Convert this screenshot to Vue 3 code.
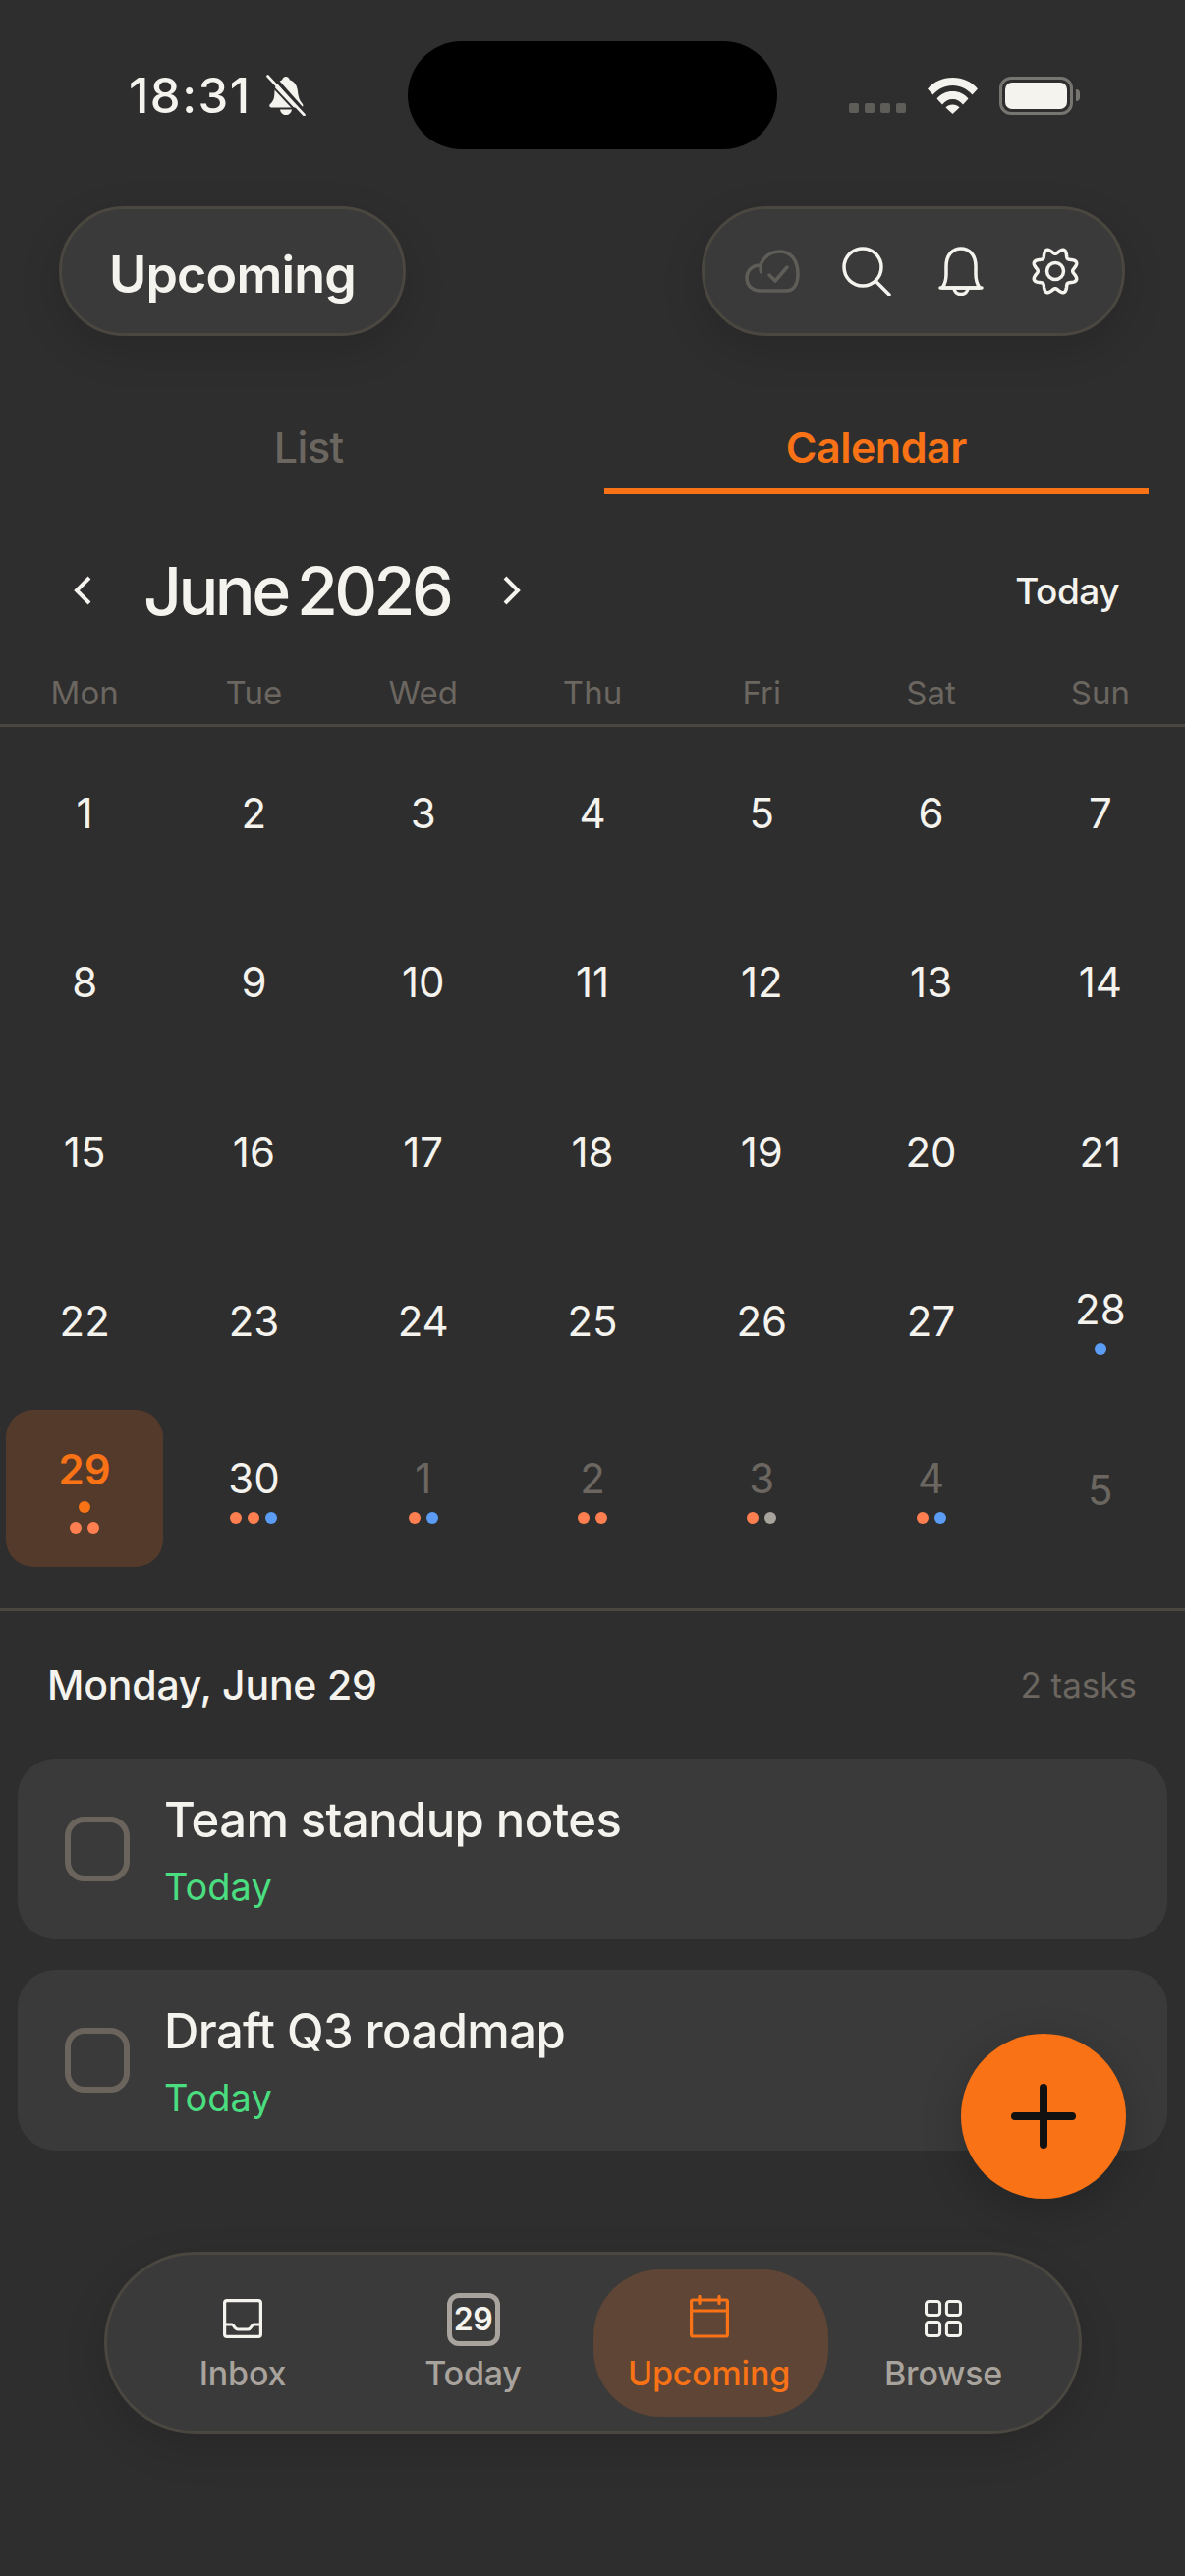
<template>
  <div class="screen">
    <div class="status">
      <div class="status-left">
        <span class="time">18:31</span>
        <svg class="mute" viewBox="0 0 40 42">
          <path d="M20 2c2 0 3.500 1.300 3.800 3.200C29 7 31.500 11.500 32 17c.4 5 1.500 9 5 13 1 1.500.4 3.500-2 3.500H6c-2.800 0-3.500-2-2-3.500 2.500-2.500 3.500-4.500 4-7 .6-3 .3-6 .8-9C9.800 9.500 12.500 6.500 16.200 5.200 16.500 3.300 18 2 20 2z" fill="#f5f3ee" />
          <path d="M14 35.500h12c-.5 3.500-3 5.500-6 5.500s-5.500-2-6-5.500z" fill="#f5f3ee" />
          <path d="M5.500 0l35 39.500" stroke="#2e2e2e" stroke-width="3.500" />
          <path d="M1.500 1.500l37 39.500" stroke="#f5f3ee" stroke-width="2.600" stroke-linecap="round" />
          <path d="M-2 3l37 39.500" stroke="#2e2e2e" stroke-width="2" />
        </svg>
      </div>
      <div class="island"></div>
      <div class="status-right">
        <div class="cell-dots"><i v-for="n in 4" :key="n"></i></div>
        <svg class="wifi" viewBox="0 0 51 38">
          <path d="M0 12.500C6.500 5 15 1 25.500 1S44.500 5 51 12.500l-5.500 6C40 12.500 33.500 9 25.500 9S11 12.500 5.500 18.500z" fill="#f5f3ee" />
          <path d="M9.500 22.500C13.500 17.500 19 15 25.500 15s12 2.500 16 7.500l-5.500 6c-2.800-3.500-6-5.500-10.500-5.500S17.800 25 15 28.500z" fill="#f5f3ee" />
          <path d="M18.500 31.500c1.800-1.800 4-3 7-3s5.200 1.200 7 3L25.500 38z" fill="#f5f3ee" />
        </svg>
        <div class="battery"><div class="battery-fill"></div></div>
        <div class="battery-nub"></div>
      </div>
    </div>

    <header class="top">
      <div class="title-pill">Upcoming</div>
      <div class="actions">
        <svg class="ic cloud" viewBox="0 0 56 44" fill="none" stroke="#5f5d58" stroke-width="3.500" stroke-linecap="round" stroke-linejoin="round">
          <path d="M16 42h26c8 0 12-7 12-17C54 11 47 2 36 2 27 2 19 7 16 16 8 16 2 21 2 29c0 8 6 13 14 13z" />
          <path d="M16 16c0 0 0 4 .5 7" />
          <path d="M25 26l6 6 12-14" />
        </svg>
        <svg class="ic search" viewBox="0 0 50 50" fill="none" stroke="#f5f3ee" stroke-width="3.500" stroke-linecap="round">
          <circle cx="21" cy="21" r="19" />
          <path d="M34 35l14 14" />
        </svg>
        <svg class="ic bell" viewBox="0 0 46 50" fill="none" stroke="#f5f3ee" stroke-width="3.500" stroke-linecap="round" stroke-linejoin="round">
          <path d="M4 42c3-4 4-8 4-14v-8C8 9 14 2 23 2s15 7 15 18v8c0 6 1 10 4 14z" />
          <path d="M2 42h42" />
          <path d="M16 42c0 4 3 6.500 7 6.500s7-2.500 7-6.500" />
        </svg>
        <svg class="ic gear" viewBox="0 0 50 50" fill="none" stroke="#f5f3ee" stroke-width="3.500" stroke-linejoin="round">
          <path :d="gearPath" />
          <circle cx="25" cy="25" r="8.500" />
        </svg>
      </div>
    </header>

    <nav class="tabs">
      <div class="tab">List</div>
      <div class="tab active">Calendar</div>
    </nav>

    <div class="month-row">
      <svg class="chev" viewBox="0 0 20 30" fill="none" stroke="#f5f3ee" stroke-width="4"><path d="M17 2L4 15l13 13" /></svg>
      <div class="month">June 2026</div>
      <svg class="chev next" viewBox="0 0 20 30" fill="none" stroke="#f5f3ee" stroke-width="4"><path d="M3 2l13 13L3 28" /></svg>
      <div class="today-btn">Today</div>
    </div>

    <div class="weekdays">
      <span v-for="d in weekdays" :key="d">{{ d }}</span>
    </div>

    <div class="grid">
      <div v-for="c in cells" :key="c.key" class="cell" :class="{ muted: c.muted, selected: c.selected }">
        <span class="num">{{ c.n }}</span>
        <div v-if="c.dots.length" class="dots">
          <i v-for="(col, i) in c.dots" :key="i" :style="{ background: col }"></i>
        </div>
      </div>
    </div>

    <section class="day">
      <div class="day-head">
        <span class="day-title">Monday, June 29</span>
        <span class="day-count">2 tasks</span>
      </div>
      <div v-for="t in tasks" :key="t" class="task">
        <div class="check"></div>
        <div>
          <div class="task-title">{{ t }}</div>
          <div class="task-date">Today</div>
        </div>
      </div>
    </section>

    <button class="fab">
      <svg viewBox="0 0 66 66" stroke="#111" stroke-width="8" stroke-linecap="round"><path d="M33 4v58M4 33h58" /></svg>
    </button>

    <div class="bottom-nav">
      <div class="nav-item inbox">
        <svg class="nav-ic" viewBox="0 0 40 40" fill="none" stroke="#f5f3ee" stroke-width="3.200" stroke-linejoin="round">
          <rect x="1.600" y="1.600" width="36.800" height="36.800" rx="2.500" />
          <path d="M1.600 26h7.500c2 0 2.500 5 6 5h10c3.500 0 4-5 6-5h7.300" />
        </svg>
        <span>Inbox</span>
      </div>
      <div class="nav-item today">
        <div class="today-ic">29</div>
        <span>Today</span>
      </div>
      <div class="nav-item upcoming">
        <svg class="nav-ic cal" viewBox="0 0 40 44" fill="none" stroke="#f97316" stroke-width="3.200" stroke-linecap="round">
          <rect x="1.600" y="5" width="36.800" height="37" rx="1.500" />
          <path d="M1.600 16h36.800M10 1.500v7M30 1.500v7" />
        </svg>
        <span>Upcoming</span>
      </div>
      <div class="nav-item browse">
        <svg class="nav-ic" viewBox="0 0 40 40" fill="none" stroke="#f5f3ee" stroke-width="3.200">
          <rect x="1.600" y="1.600" width="14.800" height="14.800" rx="3" />
          <rect x="23.600" y="1.600" width="14.800" height="14.800" rx="3" />
          <rect x="1.600" y="23.600" width="14.800" height="14.800" rx="3" />
          <rect x="23.600" y="23.600" width="14.800" height="14.800" rx="3" />
        </svg>
        <span>Browse</span>
      </div>
    </div>
  </div>
</template>

<script setup>
const weekdays = ['Mon', 'Tue', 'Wed', 'Thu', 'Fri', 'Sat', 'Sun']
const tasks = ['Team standup notes', 'Draft Q3 roadmap']

const orange = '#ff7f50'
const blue = '#5b9cf5'
const grey = '#a8a39c'

const cells = []
for (let n = 1; n <= 30; n++) {
  cells.push({ key: 'j' + n, n, muted: false, selected: n === 29, dots: [] })
}
cells[27].dots = [blue]
cells[28].dots = [orange, orange, '#f97316']
cells[29].dots = [orange, orange, blue]

const nextMonth = [[orange, blue], [orange, orange], [orange, grey], [orange, blue], []]
nextMonth.forEach((dots, i) => {
  cells.push({ key: 'n' + i, n: i + 1, muted: true, selected: false, dots })
})

// wavy 8 lobe outline for the settings icon
let gearPath = ''
for (let i = 0; i <= 160; i++) {
  const a = (i / 160) * Math.PI * 2
  const r = 20.5 + 2.8 * Math.cos(8 * a)
  const x = 25 + r * Math.sin(a + Math.PI / 8)
  const y = 25 - r * Math.cos(a + Math.PI / 8)
  gearPath += (i ? 'L' : 'M') + x.toFixed(2) + ' ' + y.toFixed(2)
}
gearPath += 'Z'
</script>

<style scoped>
.screen {
  position: relative;
  width: 1206px;
  height: 2622px;
  overflow: hidden;
  background: #2e2e2e;
  color: #f5f3ee;
  font-family: Inter, "Liberation Sans", sans-serif;
}

.status {
  display: flex;
  align-items: center;
  height: 110px;
  padding: 42px 0 0 131px;
}
.status-left {
  display: flex;
  align-items: center;
  gap: 15px;
  width: 284px;
  height: 110px;
}
.time {
  font-size: 49px;
  font-weight: 500;
  letter-spacing: 1.5px;
  line-height: 1;
}
.mute {
  width: 40px;
  height: 42px;
}
.island {
  width: 376px;
  height: 110px;
  border-radius: 55px;
  background: #000;
}
.status-right {
  display: flex;
  align-items: center;
  margin-left: 73px;
  height: 110px;
}
.cell-dots {
  display: flex;
  gap: 6px;
  margin-top: 26px;
}
.cell-dots i {
  width: 10px;
  height: 10px;
  border-radius: 2px;
  background: #5f5d58;
}
.wifi {
  width: 51px;
  height: 38px;
  margin-left: 22px;
}
.battery {
  width: 75px;
  height: 39px;
  margin-left: 22px;
  padding: 3px;
  box-sizing: border-box;
  border: 3px solid #77756f;
  border-radius: 12px;
}
.battery-fill {
  width: 100%;
  height: 100%;
  border-radius: 7px;
  background: #f5f3ee;
}
.battery-nub {
  width: 4px;
  height: 12px;
  margin-left: 3px;
  border-radius: 0 6px 6px 0;
  background: #77756f;
}

.top {
  display: flex;
  justify-content: space-between;
  height: 132px;
  margin-top: 58px;
  padding: 0 61px 0 60px;
}
.title-pill,
.actions {
  height: 132px;
  box-sizing: border-box;
  border: 3px solid #4a4640;
  border-radius: 66px;
  background: #3a3a3a;
  box-shadow: 0 14px 44px rgba(0, 0, 0, 0.14);
}
.title-pill {
  width: 353px;
  text-align: center;
  font-size: 52px;
  font-weight: 600;
  line-height: 134px;
  letter-spacing: -0.8px;
}
.actions {
  display: flex;
  align-items: center;
  width: 431px;
  padding-left: 41px;
}
.ic {
  display: block;
  flex: none;
}
.cloud {
  width: 56px;
  height: 44px;
}
.search {
  width: 50px;
  height: 50px;
  margin-left: 43px;
}
.bell {
  width: 46px;
  height: 50px;
  margin-left: 48px;
}
.gear {
  width: 50px;
  height: 50px;
  margin-left: 48px;
}

.tabs {
  display: grid;
  grid-template-columns: 1fr 1fr;
  gap: 23px;
  padding: 0 37px;
  margin-top: 76px;
}
.tab {
  height: 85px;
  text-align: center;
  font-size: 43px;
  line-height: 74px;
  font-weight: 500;
  color: #6b6660;
  letter-spacing: -0.5px;
}
.tab.active {
  color: #f97316;
  font-weight: 600;
  border-bottom: 6px solid #f97316;
  box-sizing: border-box;
}

.month-row {
  display: flex;
  align-items: center;
  height: 120px;
  margin-top: 38px;
  padding: 0 67px 0 74px;
}
.chev {
  width: 20px;
  height: 30px;
}
.month {
  margin-left: 52px;
  font-size: 68px;
  font-weight: 500;
  letter-spacing: -3.6px;
  word-spacing: -5px;
  line-height: 1;
}
.chev.next {
  margin-left: 53px;
}
.today-btn {
  margin-left: auto;
  font-size: 37px;
  font-weight: 500;
  letter-spacing: -0.5px;
}

.weekdays {
  display: grid;
  grid-template-columns: repeat(7, 1fr);
  height: 57px;
  margin-top: 22px;
  box-sizing: border-box;
  border-bottom: 3px solid #4a4640;
  font-size: 33px;
  line-height: 44px;
  text-align: center;
  color: #6b6660;
}

.grid {
  display: grid;
  grid-template-columns: repeat(7, 1fr);
  grid-auto-rows: 172.3px;
  padding-top: 2px;
  padding-bottom: 34px;
  border-bottom: 3px solid #4a4640;
}
.cell {
  display: flex;
  flex-direction: column;
  align-items: center;
  justify-content: center;
  margin: 6px;
  border-radius: 28px;
}
.num {
  font-size: 42px;
  line-height: 44px;
}
.muted .num {
  color: #6b6660;
}
.selected {
  margin: 4px 6px 8px;
  padding-top: 4px;
  background: #543a2b;
}
.selected .num {
  color: #f97316;
  font-weight: 600;
}
.dots {
  display: flex;
  flex-wrap: wrap-reverse;
  justify-content: center;
  gap: 9px 6px;
  width: 50px;
  margin-top: 12px;
}
.dots i {
  width: 12px;
  height: 12px;
  border-radius: 50%;
}
.selected .dots {
  width: 32px;
  margin-top: 10px;
}

.day {
  padding: 0 18px;
}
.day-head {
  display: flex;
  justify-content: space-between;
  align-items: center;
  height: 150px;
  padding: 0 31px 0 30px;
  box-sizing: border-box;
}
.day-title {
  font-size: 41px;
  font-weight: 500;
  letter-spacing: -0.2px;
}
.day-count {
  font-size: 35px;
  color: #6b6660;
}
.task {
  display: flex;
  align-items: center;
  gap: 35px;
  height: 184px;
  margin-bottom: 31px;
  padding-left: 48px;
  box-sizing: border-box;
  border-radius: 38px;
  background: #3a3a3a;
}
.check {
  flex: none;
  width: 66px;
  height: 66px;
  box-sizing: border-box;
  border: 6px solid #6b645c;
  border-radius: 20px;
}
.task-title {
  font-size: 49px;
  font-weight: 500;
  line-height: 60px;
  letter-spacing: -0.6px;
}
.task-date {
  margin-top: 15px;
  font-size: 38px;
  line-height: 44px;
  color: #4ade80;
}

.fab {
  position: absolute;
  left: 978px;
  top: 2070px;
  display: flex;
  align-items: center;
  justify-content: center;
  width: 168px;
  height: 168px;
  padding: 0;
  border: 0;
  border-radius: 50%;
  background: #f97316;
  box-shadow: 0 12px 44px rgba(0, 0, 0, 0.2);
}
.fab svg {
  width: 66px;
  height: 66px;
}

.bottom-nav {
  position: absolute;
  left: 106px;
  top: 2292px;
  display: grid;
  grid-template-columns: 224px 245px 239px 234px;
  align-items: center;
  width: 995px;
  height: 185px;
  padding-left: 26px;
  box-sizing: border-box;
  border: 3px solid #4a4640;
  border-radius: 93px;
  background: #3a3a3a;
  box-shadow: 0 14px 44px rgba(0, 0, 0, 0.14);
}
.nav-item {
  display: flex;
  flex-direction: column;
  align-items: center;
  justify-content: flex-end;
  height: 150px;
  padding-bottom: 22px;
  box-sizing: border-box;
  font-size: 34px;
  font-weight: 500;
  line-height: 44px;
  letter-spacing: -0.2px;
  color: #a8a39c;
}
.nav-ic {
  width: 40px;
  height: 40px;
  margin-bottom: 14px;
}
.nav-ic.cal {
  height: 44px;
}
.browse .nav-ic {
  width: 38px;
  height: 38px;
  margin-bottom: 15px;
}
.today-ic {
  width: 54px;
  height: 54px;
  margin-bottom: 6px;
  box-sizing: border-box;
  border: 5px solid #a8a39c;
  border-radius: 12px;
  text-align: center;
  font-size: 32px;
  font-weight: 600;
  line-height: 44px;
  letter-spacing: -0.5px;
  color: #f5f3ee;
}
.upcoming {
  padding-right: 4px;
  border-radius: 68px;
  background: #5e4535;
  color: #f97316;
}
</style>
